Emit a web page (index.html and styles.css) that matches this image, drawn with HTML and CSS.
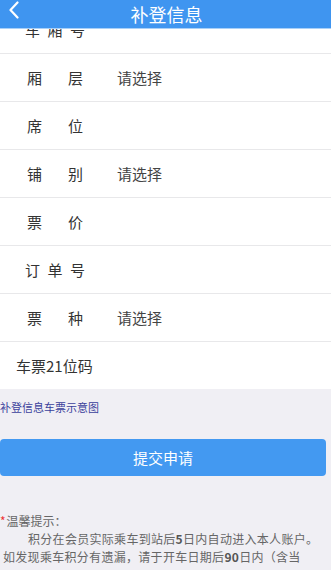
FILE: index.html
```html
<!DOCTYPE html>
<html lang="zh">
<head>
<meta charset="utf-8">
<title>补登信息</title>
<link rel="stylesheet" href="styles.css">
</head>
<body>
<header class="topbar">
  <svg class="back" width="12" height="18" viewBox="0 0 12 18"><polyline points="9.5,1.5 2.5,9 9.5,16.5" fill="none" stroke="#fff" stroke-width="2.2" stroke-linecap="round" stroke-linejoin="round"/></svg>
  <h1 class="title">补登信息</h1>
</header>
<main class="page">
  <section class="form">
    <div class="row"><span class="label three"><i>车</i><i>厢</i><i>号</i></span></div>
    <div class="row"><span class="label two"><i>厢</i><i>层</i></span><span class="value">请选择</span></div>
    <div class="row"><span class="label two"><i>席</i><i>位</i></span></div>
    <div class="row"><span class="label two"><i>铺</i><i>别</i></span><span class="value">请选择</span></div>
    <div class="row"><span class="label two"><i>票</i><i>价</i></span></div>
    <div class="row"><span class="label three"><i>订</i><i>单</i><i>号</i></span></div>
    <div class="row"><span class="label two"><i>票</i><i>种</i></span><span class="value">请选择</span></div>
    <div class="row last"><span class="code">车票21位码</span></div>
  </section>
  <section class="footer">
    <a class="sample" href="#">补登信息车票示意图</a>
    <button class="submit" type="button">提交申请</button>
    <p class="tip-title"><span class="star">*</span>温馨提示：</p>
    <p class="tip-text"><span class="indent"></span>积分在会员实际乘车到站后<b>5</b>日内自动进入本人账户。<br>如发现乘车积分有遗漏，请于开车日期后<b>90</b>日内（含当</p>
  </section>
</main>
</body>
</html>
```
FILE: styles.css
```css
html, body {
  margin: 0;
  padding: 0;
}
body {
  font-family: "Noto Sans CJK SC", "Noto Sans", sans-serif;
  background: #f0eff4;
  color: #333;
  width: 331px;
  height: 570px;
  overflow: hidden;
}
.topbar {
  position: fixed;
  top: 0;
  left: 0;
  right: 0;
  height: 28px;
  background: #3f95f0;
  border-bottom: 1px solid #a9d0f8;
  z-index: 10;
  display: flex;
  align-items: center;
  justify-content: center;
}
.back {
  position: absolute;
  left: 8px;
  top: 1px;
}
.title {
  margin: 0 0 0 2px;
  font-size: 18px;
  font-weight: normal;
  color: #fff;
  line-height: 26px;
}
.page {
  padding-top: 6px;
}
.form {
  background: #fff;
}
.row {
  height: 47px;
  border-bottom: 1px solid #e8e8ea;
  display: flex;
  align-items: center;
  font-size: 15px;
  color: #333;
}
.row.last {
  border-bottom: none;
}
.label {
  display: flex;
  justify-content: space-between;
}
.label i {
  font-style: normal;
}
.label.two {
  width: 56px;
  margin-left: 27px;
}
.label.three {
  width: 60px;
  margin-left: 25px;
}
.value {
  margin-left: 34px;
  color: #444;
}
.code {
  margin-left: 16px;
  color: #333;
}
.footer {
  padding: 0 5px 0 0;
}
.sample {
  display: block;
  margin-top: 11px;
  font-size: 11px;
  line-height: 14px;
  color: #3b3f9c;
  text-decoration: none;
}
.submit {
  display: block;
  width: 326px;
  height: 37px;
  margin-top: 25px;
  border: none;
  border-radius: 4px;
  background: #4399f1;
  color: #fff;
  font-family: inherit;
  font-size: 15px;
  padding: 0;
}
.tip-title {
  margin: 35px 0 0;
  font-size: 12px;
  line-height: 19px;
  color: #666;
}
.star {
  color: #e33;
  margin-right: 1px;
}
.tip-text {
  margin: 0;
  padding-left: 3px;
  font-size: 12px;
  line-height: 18px;
  letter-spacing: 0.3px;
  color: #666;
  white-space: nowrap;
}
.tip-text b {
  color: #555;
}
.indent {
  display: inline-block;
  width: 25px;
}
```
